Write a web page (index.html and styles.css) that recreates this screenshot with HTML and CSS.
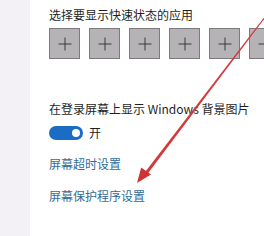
FILE: index.html
```html
<!DOCTYPE html>
<html lang="zh-CN">
<head>
<meta charset="utf-8">
<link rel="stylesheet" href="styles.css">
</head>
<body>
<div class="page">
  <aside class="sidebar"></aside>
  <main class="main">
    <div class="label">选择要显示快速状态的应用</div>
    <div class="apps">
      <div class="app"></div>
      <div class="app"></div>
      <div class="app"></div>
      <div class="app"></div>
      <div class="app"></div>
      <div class="app"></div>
    </div>
    <div class="label label-2">在登录屏幕上显示 Windows 背景图片</div>
    <div class="toggle-row">
      <span class="toggle"><span class="knob"></span></span>
      <span class="toggle-text">开</span>
    </div>
    <a class="link link-1">屏幕超时设置</a>
    <a class="link link-2">屏幕保护程序设置</a>
  </main>
  <svg class="arrow" width="264" height="236" viewBox="0 0 264 236">
    <polygon points="267.6,12.7 268.4,13.3 145.2,176.9 142.8,175.1" fill="#d23a3a"/>
    <polygon points="137,183 151,174.6 141.2,167.4" fill="#cf3333"/>
  </svg>
</div>
</body>
</html>
```
FILE: styles.css
```css
html, body {
  margin: 0;
  padding: 0;
  background: #ffffff;
}
.page {
  position: relative;
  display: flex;
  width: 264px;
  height: 236px;
  overflow: hidden;
  font-family: "Noto Sans CJK SC", "Noto Sans", sans-serif;
  font-size: 12px;
  line-height: 16px;
  color: #1f1f1f;
}
.sidebar {
  width: 30px;
  flex: none;
  background: #f3f1f5;
}
.main {
  flex: 1;
  padding: 7px 0 0 19px;
  display: flex;
  flex-direction: column;
  align-items: flex-start;
  min-width: 0;
}
.label {
  white-space: nowrap;
}
.apps {
  display: flex;
  gap: 9px;
  margin-top: 5px;
}
.app {
  position: relative;
  flex: none;
  width: 29px;
  height: 29px;
  background: #b6b3b7;
  border: 1px solid #7c7a7d;
}
.app::before,
.app::after {
  content: "";
  position: absolute;
  background: #3a3a3a;
  left: 50%;
  top: 50%;
}
.app::before {
  width: 13px;
  height: 1px;
  transform: translate(-50%, -50%);
}
.app::after {
  width: 1px;
  height: 13px;
  transform: translate(-50%, -50%);
}
.label-2 {
  margin-top: 42px;
}
.toggle-row {
  display: flex;
  align-items: center;
  gap: 6px;
  margin-top: 8px;
  height: 16px;
}
.toggle {
  display: flex;
  align-items: center;
  justify-content: flex-end;
  width: 34px;
  height: 14px;
  border-radius: 7px;
  background: #1b6cc4;
  padding: 0 3px;
  box-sizing: border-box;
}
.knob {
  width: 8px;
  height: 8px;
  border-radius: 50%;
  background: #ffffff;
}
.link {
  color: #2f6c9a;
  white-space: nowrap;
}
.link-1 {
  margin-top: 15px;
}
.link-2 {
  margin-top: 16px;
}
.arrow {
  position: absolute;
  top: 0;
  left: 0;
  pointer-events: none;
}
```
